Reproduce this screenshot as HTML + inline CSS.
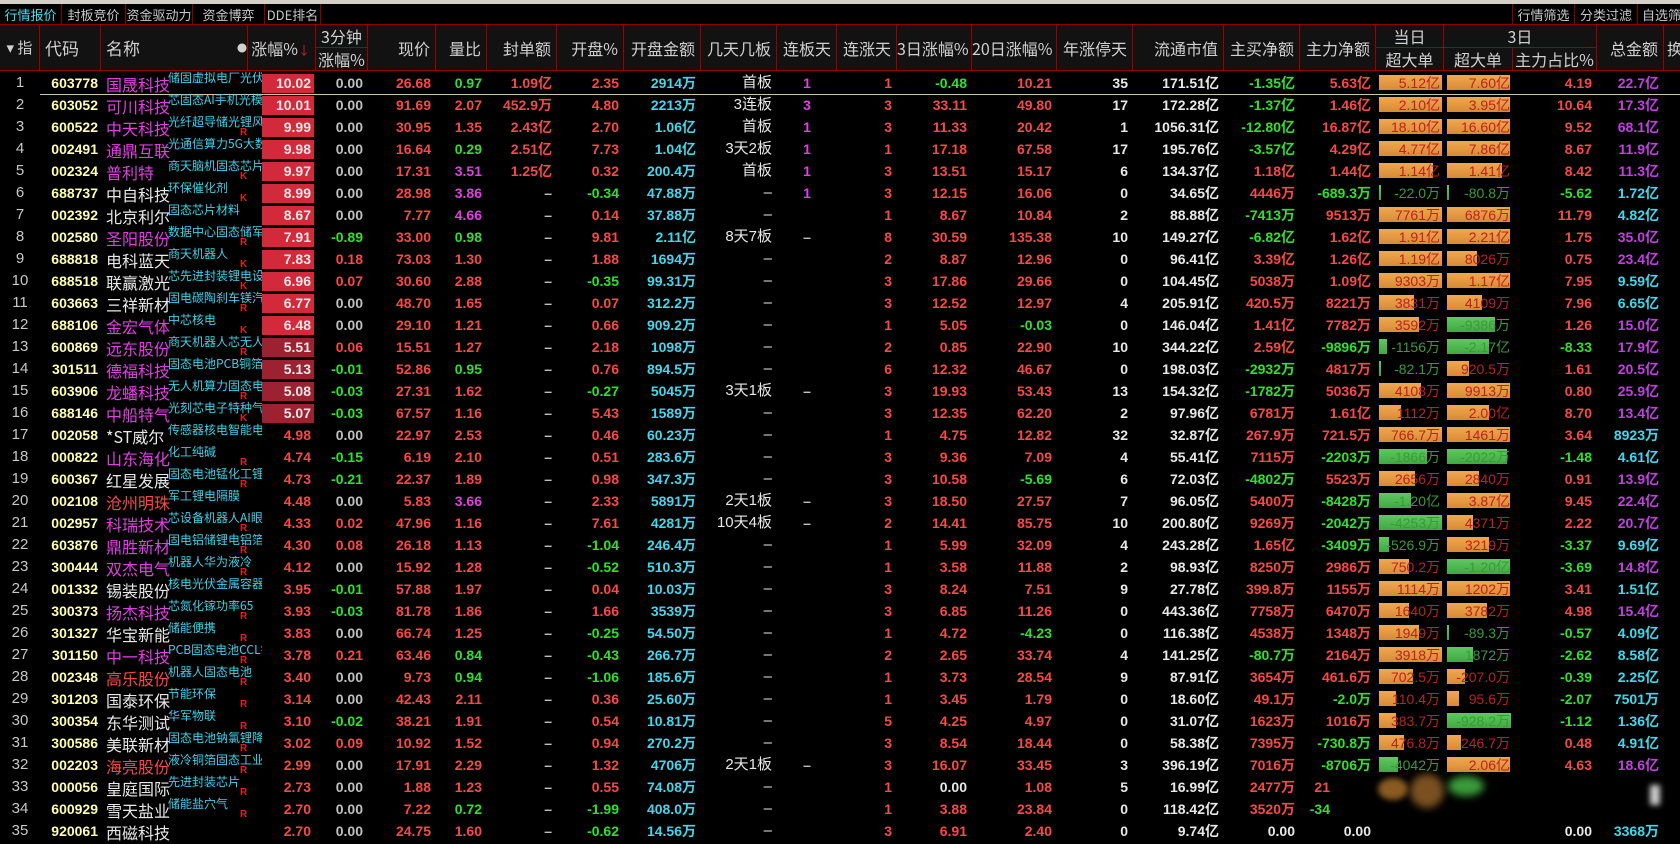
<!DOCTYPE html>
<html><head><meta charset="utf-8">
<style>
*{margin:0;padding:0;box-sizing:border-box}
body{width:1680px;height:837px;background:#000;overflow:hidden;position:relative;font-family:"Liberation Sans","Noto Sans CJK SC",sans-serif;color:#e0e0e0}
.top{position:absolute;left:0;top:0;width:1680px;height:4px;background:#d4d0c8}
.tabs{position:absolute;left:0;top:4px;height:21px;width:1680px;background:#000;border-bottom:1px solid #800}
.tab{position:absolute;top:0;height:21px;line-height:21px;font-size:13px;color:#c8c8c8;text-align:center;border-right:1px solid #800;font-family:"Noto Sans CJK SC",sans-serif}
.hd{position:absolute;top:25px;height:46px;left:0;width:1680px;background:#121212;border-bottom:1px solid #900}
.h{position:absolute;height:46px;line-height:46px;font-size:16px;color:#d0d0d0;border-right:1px solid #900;text-align:right;padding-right:5px;font-family:"Noto Sans CJK SC",sans-serif;white-space:nowrap;overflow:hidden}
.h2{height:23px;line-height:23px}
.r{position:absolute;left:0;width:1680px;height:22px;line-height:22px}
.r i{position:absolute;top:0;font-style:normal;font-weight:bold;font-size:14px;text-align:right;white-space:nowrap;font-family:"Liberation Sans","Noto Sans CJK SC",sans-serif}
.r i.c0{left:0;width:40px;text-align:center;color:#c8c8c8;font-weight:normal;font-size:15px}
.r i.c1{left:40px;width:58px;color:#ffffb0}
.r i.c2{left:106px;width:62px;text-align:left;font-size:16px;font-weight:normal;font-family:"Noto Sans CJK SC",sans-serif;top:1px}
.r i.c3{left:168px;width:94px;overflow:hidden;text-align:left;font-size:12px;font-weight:normal;color:#40d0e8;top:-5px;font-family:"Noto Sans CJK SC",sans-serif}
.r i.rk{left:240px;width:10px;font-size:10px;color:#e02020;top:6px;text-align:left}
.zb{position:absolute;left:262px;top:2px;width:52px;height:19px;background:#d22a3a}
.zb.d{background:#9c2232}
.r i.c4{left:248px;width:63px}
.r i.c5{left:316px;width:47px}
.r i.c6{left:368px;width:63px}
.r i.c7{left:436px;width:46px}
.r i.c8{left:487px;width:65px}
.r i.c9{left:556px;width:63px}
.r i.c10{left:624px;width:72px}
.r i.c11{left:701px;width:71px;font-weight:normal;font-size:15px}
.r i.c12{left:777px;width:60px;text-align:center}
.r i.c13{left:837px;width:55px}
.r i.c14{left:897px;width:70px}
.r i.c15{left:972px;width:80px}
.r i.c16{left:1057px;width:71px}
.r i.c17{left:1133px;width:86px}
.r i.c18{left:1224px;width:71px}
.r i.c19{left:1300px;width:71px}
.r i.c20{left:1376px;width:64px;font-weight:normal}
.r i.c21{left:1444px;width:66px;font-weight:normal}
.r i.c22{left:1513px;width:79px}
.r i.c23{left:1597px;width:62px}
.bd,.bt{position:absolute;top:3px;height:15px;background:linear-gradient(#f0a850,#d88a34)}
.bd{left:1379px}.bt{left:1447px}
.gn{background:linear-gradient(#60c860,#40a840)}
.R{color:#f84848!important}.G{color:#30e030!important}.W{color:#e8e8e8!important}.M{color:#e040e0!important}.C{color:#40d8ec!important}.S{color:#c0c0c0!important}.P{color:#c040e0!important}
.o{color:#c02020!important}.og{color:#3a9a3a!important}
.sep{position:absolute;left:40px;top:94px;width:1640px;height:1px;background:#c8c8a8}
</style></head><body>
<div class="top"></div>
<div class="tabs">
<div class="tab" style="left:0;width:62px;color:#40e0e8">行情报价</div>
<div class="tab" style="left:62px;width:64px">封板竞价</div>
<div class="tab" style="left:126px;width:67px">资金驱动力</div>
<div class="tab" style="left:193px;width:72px">资金博弈</div>
<div class="tab" style="left:265px;width:56px">DDE排名</div>
<div class="tab" style="left:1512px;width:63px;border-left:1px solid #800">行情筛选</div>
<div class="tab" style="left:1575px;width:63px">分类过滤</div>
<div class="tab" style="left:1638px;width:50px;text-align:left;padding-left:4px">自选筛</div>
</div>
<div class="hd">
<div class="h" style="left:0;width:40px;text-align:center;padding:0;font-size:15px">▾ 指</div>
<div class="h" style="left:40px;width:61px;text-align:left;padding-left:5px;font-size:17px">代码</div>
<div class="h" style="left:101px;width:147px;text-align:left;padding-left:5px;font-size:17px">名称<span style="position:absolute;left:136px;font-size:10px">●</span></div>
<div class="h" style="left:248px;width:68px">涨幅%<span style="color:#e02020;font-size:12px">↓</span></div>
<div class="h h2" style="left:316px;width:52px;text-align:center;padding:0;border-bottom:1px solid #900">3分钟</div>
<div class="h h2" style="left:316px;top:23px;width:52px;text-align:center;padding:0">涨幅%</div>
<div class="h" style="left:368px;width:68px">现价</div>
<div class="h" style="left:436px;width:51px">量比</div>
<div class="h" style="left:487px;width:70px">封单额</div>
<div class="h" style="left:557px;width:67px">开盘%</div>
<div class="h" style="left:624px;width:77px">开盘金额</div>
<div class="h" style="left:701px;width:76px">几天几板</div>
<div class="h" style="left:777px;width:60px">连板天</div>
<div class="h" style="left:837px;width:60px">连涨天</div>
<div class="h" style="left:897px;width:75px">3日涨幅%</div>
<div class="h" style="left:972px;width:85px">20日涨幅%</div>
<div class="h" style="left:1057px;width:76px">年涨停天</div>
<div class="h" style="left:1133px;width:91px">流通市值</div>
<div class="h" style="left:1224px;width:76px">主买净额</div>
<div class="h" style="left:1300px;width:76px">主力净额</div>
<div class="h h2" style="left:1376px;width:68px;text-align:center;padding:0;border-bottom:1px solid #900">当日</div>
<div class="h h2" style="left:1376px;top:23px;width:68px;text-align:center;padding:0">超大单</div>
<div class="h h2" style="left:1444px;width:153px;text-align:center;padding:0;border-bottom:1px solid #900">3日</div>
<div class="h h2" style="left:1444px;top:23px;width:69px;text-align:center;padding:0">超大单</div>
<div class="h h2" style="left:1513px;top:23px;width:84px;text-align:center;padding:0">主力占比%</div>
<div class="h" style="left:1597px;width:67px">总金额</div>
<div class="h" style="left:1664px;width:30px;text-align:left;padding-left:3px;border:0">换</div>
</div>

<div class="r" style="top:72px"><i class="c0">1</i><i class="c1">603778</i><i class="c2 M">国晟科技</i><i class="c3">储固虚拟电厂光伏</i><b class="zb"></b><i class="c4 W">10.02</i><i class="c5 S">0.00</i><i class="c6 R">26.68</i><i class="c7 G">0.97</i><i class="c8 R">1.09亿</i><i class="c9 R">2.35</i><i class="c10 C">2914万</i><i class="c11 W">首板</i><i class="c12 M">1</i><i class="c13 R">1</i><i class="c14 G">-0.48</i><i class="c15 R">10.21</i><i class="c16 W">35</i><i class="c17 W">171.51亿</i><i class="c18 G">-1.35亿</i><i class="c19 R">5.63亿</i><b class="bd" style="width:63px"></b><b class="bt" style="width:63px"></b><i class="c20 o">5.12亿</i><i class="c21 o">7.60亿</i><i class="c22 R">4.19</i><i class="c23 P">22.7亿</i></div>
<div class="sep"></div>
<div class="r" style="top:94px"><i class="c0">2</i><i class="c1">603052</i><i class="c2 M">可川科技</i><i class="c3">芯固态AI手机光模块</i><b class="zb"></b><i class="c4 W">10.01</i><i class="c5 S">0.00</i><i class="c6 R">91.69</i><i class="c7 R">2.07</i><i class="c8 R">452.9万</i><i class="c9 R">4.80</i><i class="c10 C">2213万</i><i class="c11 W">3连板</i><i class="c12 M">3</i><i class="c13 R">3</i><i class="c14 R">33.11</i><i class="c15 R">49.80</i><i class="c16 W">17</i><i class="c17 W">172.28亿</i><i class="c18 G">-1.37亿</i><i class="c19 R">1.46亿</i><b class="bd" style="width:63px"></b><b class="bt" style="width:63px"></b><i class="c20 o">2.10亿</i><i class="c21 o">3.95亿</i><i class="c22 R">10.64</i><i class="c23 P">17.3亿</i></div>
<div class="r" style="top:116px"><i class="c0">3</i><i class="c1">600522</i><i class="c2 M">中天科技</i><i class="c3">光纤超导储光锂风数据</i><i class="rk">R</i><b class="zb"></b><i class="c4 W">9.99</i><i class="c5 S">0.00</i><i class="c6 R">30.95</i><i class="c7 R">1.35</i><i class="c8 R">2.43亿</i><i class="c9 R">2.70</i><i class="c10 C">1.06亿</i><i class="c11 W">首板</i><i class="c12 M">1</i><i class="c13 R">3</i><i class="c14 R">11.33</i><i class="c15 R">20.42</i><i class="c16 W">1</i><i class="c17 W">1056.31亿</i><i class="c18 G">-12.80亿</i><i class="c19 R">16.87亿</i><b class="bd" style="width:63px"></b><b class="bt" style="width:63px"></b><i class="c20 o">18.10亿</i><i class="c21 o">16.60亿</i><i class="c22 R">9.52</i><i class="c23 P">68.1亿</i></div>
<div class="r" style="top:138px"><i class="c0">4</i><i class="c1">002491</i><i class="c2 M">通鼎互联</i><i class="c3">光通信算力5G大数据</i><b class="zb"></b><i class="c4 W">9.98</i><i class="c5 S">0.00</i><i class="c6 R">16.64</i><i class="c7 G">0.29</i><i class="c8 R">2.51亿</i><i class="c9 R">7.73</i><i class="c10 C">1.04亿</i><i class="c11 W">3天2板</i><i class="c12 M">1</i><i class="c13 R">1</i><i class="c14 R">17.18</i><i class="c15 R">67.58</i><i class="c16 W">17</i><i class="c17 W">195.76亿</i><i class="c18 G">-3.57亿</i><i class="c19 R">4.29亿</i><b class="bd" style="width:63px"></b><b class="bt" style="width:63px"></b><i class="c20 o">4.77亿</i><i class="c21 o">7.86亿</i><i class="c22 R">8.67</i><i class="c23 P">11.9亿</i></div>
<div class="r" style="top:160px"><i class="c0">5</i><i class="c1">002324</i><i class="c2 M">普利特</i><i class="c3">商天脑机固态芯片光刻</i><i class="rk">K</i><b class="zb"></b><i class="c4 W">9.97</i><i class="c5 S">0.00</i><i class="c6 R">17.31</i><i class="c7 M">3.51</i><i class="c8 R">1.25亿</i><i class="c9 R">0.32</i><i class="c10 C">200.4万</i><i class="c11 W">首板</i><i class="c12 M">1</i><i class="c13 R">3</i><i class="c14 R">13.51</i><i class="c15 R">15.17</i><i class="c16 W">6</i><i class="c17 W">134.37亿</i><i class="c18 R">1.18亿</i><i class="c19 R">1.44亿</i><b class="bd" style="width:54px"></b><b class="bt" style="width:55px"></b><i class="c20 o">1.14亿</i><i class="c21 o">1.41亿</i><i class="c22 R">8.42</i><i class="c23 P">11.3亿</i></div>
<div class="r" style="top:182px"><i class="c0">6</i><i class="c1">688737</i><i class="c2 W">中自科技</i><i class="c3">环保催化剂</i><i class="rk">K</i><b class="zb"></b><i class="c4 W">8.99</i><i class="c5 S">0.00</i><i class="c6 R">28.98</i><i class="c7 M">3.86</i><i class="c8 S">–</i><i class="c9 G">-0.34</i><i class="c10 C">47.88万</i><i class="c11 W">–</i><i class="c12 M">1</i><i class="c13 R">3</i><i class="c14 R">12.15</i><i class="c15 R">16.06</i><i class="c16 W">0</i><i class="c17 W">34.65亿</i><i class="c18 R">4446万</i><i class="c19 G">-689.3万</i><b class="bd gn" style="width:2px"></b><b class="bt gn" style="width:2px"></b><i class="c20 og">-22.0万</i><i class="c21 og">-80.8万</i><i class="c22 G">-5.62</i><i class="c23 C">1.72亿</i></div>
<div class="r" style="top:204px"><i class="c0">7</i><i class="c1">002392</i><i class="c2 W">北京利尔</i><i class="c3">固态芯片材料</i><b class="zb"></b><i class="c4 W">8.67</i><i class="c5 S">0.00</i><i class="c6 R">7.77</i><i class="c7 M">4.66</i><i class="c8 S">–</i><i class="c9 R">0.14</i><i class="c10 C">37.88万</i><i class="c11 W">–</i><i class="c13 R">1</i><i class="c14 R">8.67</i><i class="c15 R">10.84</i><i class="c16 W">2</i><i class="c17 W">88.88亿</i><i class="c18 G">-7413万</i><i class="c19 R">9513万</i><b class="bd" style="width:63px"></b><b class="bt" style="width:63px"></b><i class="c20 o">7761万</i><i class="c21 o">6876万</i><i class="c22 R">11.79</i><i class="c23 C">4.82亿</i></div>
<div class="r" style="top:226px"><i class="c0">8</i><i class="c1">002580</i><i class="c2 M">圣阳股份</i><i class="c3">数据中心固态储军光储</i><i class="rk">R</i><b class="zb"></b><i class="c4 W">7.91</i><i class="c5 G">-0.89</i><i class="c6 R">33.00</i><i class="c7 G">0.98</i><i class="c8 S">–</i><i class="c9 R">9.81</i><i class="c10 C">2.11亿</i><i class="c11 W">8天7板</i><i class="c12 S">–</i><i class="c13 R">8</i><i class="c14 R">30.59</i><i class="c15 R">135.38</i><i class="c16 W">10</i><i class="c17 W">149.27亿</i><i class="c18 G">-6.82亿</i><i class="c19 R">1.62亿</i><b class="bd" style="width:63px"></b><b class="bt" style="width:63px"></b><i class="c20 o">1.91亿</i><i class="c21 o">2.21亿</i><i class="c22 R">1.75</i><i class="c23 P">35.0亿</i></div>
<div class="r" style="top:248px"><i class="c0">9</i><i class="c1">688818</i><i class="c2 W">电科蓝天</i><i class="c3">商天机器人</i><i class="rk">K</i><b class="zb"></b><i class="c4 W">7.83</i><i class="c5 R">0.18</i><i class="c6 R">73.03</i><i class="c7 R">1.30</i><i class="c8 S">–</i><i class="c9 R">1.88</i><i class="c10 C">1694万</i><i class="c11 W">–</i><i class="c13 R">2</i><i class="c14 R">8.87</i><i class="c15 R">12.96</i><i class="c16 W">0</i><i class="c17 W">96.41亿</i><i class="c18 R">3.39亿</i><i class="c19 R">1.26亿</i><b class="bd" style="width:63px"></b><b class="bt" style="width:30px"></b><i class="c20 o">1.19亿</i><i class="c21 o">8026万</i><i class="c22 R">0.75</i><i class="c23 P">23.4亿</i></div>
<div class="r" style="top:270px"><i class="c0">10</i><i class="c1">688518</i><i class="c2 W">联赢激光</i><i class="c3">芯先进封装锂电设备</i><i class="rk">K</i><b class="zb"></b><i class="c4 W">6.96</i><i class="c5 R">0.07</i><i class="c6 R">30.60</i><i class="c7 R">2.88</i><i class="c8 S">–</i><i class="c9 G">-0.35</i><i class="c10 C">99.31万</i><i class="c11 W">–</i><i class="c13 R">3</i><i class="c14 R">17.86</i><i class="c15 R">29.66</i><i class="c16 W">0</i><i class="c17 W">104.45亿</i><i class="c18 R">5038万</i><i class="c19 R">1.09亿</i><b class="bd" style="width:63px"></b><b class="bt" style="width:63px"></b><i class="c20 o">9303万</i><i class="c21 o">1.17亿</i><i class="c22 R">7.95</i><i class="c23 C">9.59亿</i></div>
<div class="r" style="top:292px"><i class="c0">11</i><i class="c1">603663</i><i class="c2 W">三祥新材</i><i class="c3">固电碳陶刹车镁汽车</i><i class="rk">R</i><b class="zb"></b><i class="c4 W">6.77</i><i class="c5 S">0.00</i><i class="c6 R">48.70</i><i class="c7 R">1.65</i><i class="c8 S">–</i><i class="c9 R">0.07</i><i class="c10 C">312.2万</i><i class="c11 W">–</i><i class="c13 R">3</i><i class="c14 R">12.52</i><i class="c15 R">12.97</i><i class="c16 W">4</i><i class="c17 W">205.91亿</i><i class="c18 R">420.5万</i><i class="c19 R">8221万</i><b class="bd" style="width:35px"></b><b class="bt" style="width:35px"></b><i class="c20 o">3831万</i><i class="c21 o">4109万</i><i class="c22 R">7.96</i><i class="c23 C">6.65亿</i></div>
<div class="r" style="top:314px"><i class="c0">12</i><i class="c1">688106</i><i class="c2 M">金宏气体</i><i class="c3">中芯核电</i><i class="rk">K</i><b class="zb"></b><i class="c4 W">6.48</i><i class="c5 S">0.00</i><i class="c6 R">29.10</i><i class="c7 R">1.21</i><i class="c8 S">–</i><i class="c9 R">0.66</i><i class="c10 C">909.2万</i><i class="c11 W">–</i><i class="c13 R">1</i><i class="c14 R">5.05</i><i class="c15 G">-0.03</i><i class="c16 W">0</i><i class="c17 W">146.04亿</i><i class="c18 R">1.41亿</i><i class="c19 R">7782万</i><b class="bd" style="width:40px"></b><b class="bt gn" style="width:48px"></b><i class="c20 o">3592万</i><i class="c21 og">-9386万</i><i class="c22 R">1.26</i><i class="c23 P">15.0亿</i></div>
<div class="r" style="top:336px"><i class="c0">13</i><i class="c1">600869</i><i class="c2 M">远东股份</i><i class="c3">商天机器人芯无人机</i><i class="rk">R</i><b class="zb d"></b><i class="c4 W">5.51</i><i class="c5 R">0.06</i><i class="c6 R">15.51</i><i class="c7 R">1.27</i><i class="c8 S">–</i><i class="c9 R">2.18</i><i class="c10 C">1098万</i><i class="c11 W">–</i><i class="c13 R">2</i><i class="c14 R">0.85</i><i class="c15 R">22.90</i><i class="c16 W">10</i><i class="c17 W">344.22亿</i><i class="c18 R">2.59亿</i><i class="c19 G">-9896万</i><b class="bd gn" style="width:8px"></b><b class="bt gn" style="width:42px"></b><i class="c20 og">-1156万</i><i class="c21 og">-2.17亿</i><i class="c22 G">-8.33</i><i class="c23 P">17.9亿</i></div>
<div class="r" style="top:358px"><i class="c0">14</i><i class="c1">301511</i><i class="c2 M">德福科技</i><i class="c3">固态电池PCB铜箔5G</i><b class="zb d"></b><i class="c4 W">5.13</i><i class="c5 G">-0.01</i><i class="c6 R">52.86</i><i class="c7 G">0.95</i><i class="c8 S">–</i><i class="c9 R">0.76</i><i class="c10 C">894.5万</i><i class="c11 W">–</i><i class="c13 R">6</i><i class="c14 R">12.32</i><i class="c15 R">46.67</i><i class="c16 W">0</i><i class="c17 W">198.03亿</i><i class="c18 G">-2932万</i><i class="c19 R">4817万</i><b class="bd gn" style="width:2px"></b><b class="bt" style="width:22px"></b><i class="c20 og">-82.1万</i><i class="c21 o">920.5万</i><i class="c22 R">1.61</i><i class="c23 P">20.5亿</i></div>
<div class="r" style="top:380px"><i class="c0">15</i><i class="c1">603906</i><i class="c2 M">龙蟠科技</i><i class="c3">无人机算力固态电池</i><i class="rk">R</i><b class="zb d"></b><i class="c4 W">5.08</i><i class="c5 G">-0.03</i><i class="c6 R">27.31</i><i class="c7 R">1.62</i><i class="c8 S">–</i><i class="c9 G">-0.27</i><i class="c10 C">5045万</i><i class="c11 W">3天1板</i><i class="c12 S">–</i><i class="c13 R">3</i><i class="c14 R">19.93</i><i class="c15 R">53.43</i><i class="c16 W">13</i><i class="c17 W">154.32亿</i><i class="c18 G">-1782万</i><i class="c19 R">5036万</i><b class="bd" style="width:42px"></b><b class="bt" style="width:63px"></b><i class="c20 o">4108万</i><i class="c21 o">9913万</i><i class="c22 R">0.80</i><i class="c23 P">25.9亿</i></div>
<div class="r" style="top:402px"><i class="c0">16</i><i class="c1">688146</i><i class="c2 M">中船特气</i><i class="c3">光刻芯电子特种气体</i><i class="rk">K</i><b class="zb d"></b><i class="c4 W">5.07</i><i class="c5 G">-0.03</i><i class="c6 R">67.57</i><i class="c7 R">1.16</i><i class="c8 S">–</i><i class="c9 R">5.43</i><i class="c10 C">1589万</i><i class="c11 W">–</i><i class="c13 R">3</i><i class="c14 R">12.35</i><i class="c15 R">62.20</i><i class="c16 W">2</i><i class="c17 W">97.96亿</i><i class="c18 R">6781万</i><i class="c19 R">1.61亿</i><b class="bd" style="width:22px"></b><b class="bt" style="width:42px"></b><i class="c20 o">1112万</i><i class="c21 o">2.00亿</i><i class="c22 R">8.70</i><i class="c23 P">13.4亿</i></div>
<div class="r" style="top:424px"><i class="c0">17</i><i class="c1">002058</i><i class="c2 W">*ST威尔</i><i class="c3">传感器核电智能电网</i><i class="c4 R">4.98</i><i class="c5 S">0.00</i><i class="c6 R">22.97</i><i class="c7 R">2.53</i><i class="c8 S">–</i><i class="c9 R">0.46</i><i class="c10 C">60.23万</i><i class="c11 W">–</i><i class="c13 R">1</i><i class="c14 R">4.75</i><i class="c15 R">12.82</i><i class="c16 W">32</i><i class="c17 W">32.87亿</i><i class="c18 R">267.9万</i><i class="c19 R">721.5万</i><b class="bd" style="width:63px"></b><b class="bt" style="width:63px"></b><i class="c20 o">766.7万</i><i class="c21 o">1461万</i><i class="c22 R">3.64</i><i class="c23 C">8923万</i></div>
<div class="r" style="top:446px"><i class="c0">18</i><i class="c1">000822</i><i class="c2 M">山东海化</i><i class="c3">化工纯碱</i><i class="rk">R</i><i class="c4 R">4.74</i><i class="c5 G">-0.15</i><i class="c6 R">6.19</i><i class="c7 R">2.10</i><i class="c8 S">–</i><i class="c9 R">0.51</i><i class="c10 C">283.6万</i><i class="c11 W">–</i><i class="c13 R">3</i><i class="c14 R">9.36</i><i class="c15 R">7.09</i><i class="c16 W">4</i><i class="c17 W">55.41亿</i><i class="c18 R">7115万</i><i class="c19 G">-2203万</i><b class="bd gn" style="width:48px"></b><b class="bt gn" style="width:60px"></b><i class="c20 og">-1866万</i><i class="c21 og">-2022万</i><i class="c22 G">-1.48</i><i class="c23 C">4.61亿</i></div>
<div class="r" style="top:468px"><i class="c0">19</i><i class="c1">600367</i><i class="c2 W">红星发展</i><i class="c3">固态电池锰化工锂电</i><i class="rk">R</i><i class="c4 R">4.73</i><i class="c5 G">-0.21</i><i class="c6 R">22.37</i><i class="c7 R">1.89</i><i class="c8 S">–</i><i class="c9 R">0.98</i><i class="c10 C">347.3万</i><i class="c11 W">–</i><i class="c13 R">3</i><i class="c14 R">10.58</i><i class="c15 G">-5.69</i><i class="c16 W">6</i><i class="c17 W">72.03亿</i><i class="c18 G">-4802万</i><i class="c19 R">5523万</i><b class="bd" style="width:36px"></b><b class="bt" style="width:32px"></b><i class="c20 o">2656万</i><i class="c21 o">2840万</i><i class="c22 R">0.91</i><i class="c23 P">13.9亿</i></div>
<div class="r" style="top:490px"><i class="c0">20</i><i class="c1">002108</i><i class="c2 R" style="font-weight:normal">沧州明珠</i><i class="c3">军工锂电隔膜</i><i class="c4 R">4.48</i><i class="c5 S">0.00</i><i class="c6 R">5.83</i><i class="c7 M">3.66</i><i class="c8 S">–</i><i class="c9 R">2.33</i><i class="c10 C">5891万</i><i class="c11 W">2天1板</i><i class="c12 S">–</i><i class="c13 R">3</i><i class="c14 R">18.50</i><i class="c15 R">27.57</i><i class="c16 W">7</i><i class="c17 W">96.05亿</i><i class="c18 R">5400万</i><i class="c19 G">-8428万</i><b class="bd gn" style="width:32px"></b><b class="bt" style="width:63px"></b><i class="c20 og">-1.20亿</i><i class="c21 o">3.87亿</i><i class="c22 R">9.45</i><i class="c23 P">22.4亿</i></div>
<div class="r" style="top:512px"><i class="c0">21</i><i class="c1">002957</i><i class="c2 M">科瑞技术</i><i class="c3">芯设备机器人AI眼镜</i><i class="rk">R</i><i class="c4 R">4.33</i><i class="c5 R">0.02</i><i class="c6 R">47.96</i><i class="c7 R">1.16</i><i class="c8 S">–</i><i class="c9 R">7.61</i><i class="c10 C">4281万</i><i class="c11 W">10天4板</i><i class="c12 S">–</i><i class="c13 R">2</i><i class="c14 R">14.41</i><i class="c15 R">85.75</i><i class="c16 W">10</i><i class="c17 W">200.80亿</i><i class="c18 R">9269万</i><i class="c19 G">-2042万</i><b class="bd gn" style="width:63px"></b><b class="bt" style="width:26px"></b><i class="c20 og">-4253万</i><i class="c21 o">4371万</i><i class="c22 R">2.22</i><i class="c23 P">20.7亿</i></div>
<div class="r" style="top:534px"><i class="c0">22</i><i class="c1">603876</i><i class="c2 M">鼎胜新材</i><i class="c3">固电铝储锂电铝箔</i><i class="rk">R</i><i class="c4 R">4.30</i><i class="c5 R">0.08</i><i class="c6 R">26.18</i><i class="c7 R">1.13</i><i class="c8 S">–</i><i class="c9 G">-1.04</i><i class="c10 C">246.4万</i><i class="c11 W">–</i><i class="c13 R">1</i><i class="c14 R">5.99</i><i class="c15 R">32.09</i><i class="c16 W">4</i><i class="c17 W">243.28亿</i><i class="c18 R">1.65亿</i><i class="c19 G">-3409万</i><b class="bd gn" style="width:10px"></b><b class="bt" style="width:42px"></b><i class="c20 og">-526.9万</i><i class="c21 o">3219万</i><i class="c22 G">-3.37</i><i class="c23 C">9.69亿</i></div>
<div class="r" style="top:556px"><i class="c0">23</i><i class="c1">300444</i><i class="c2 M">双杰电气</i><i class="c3">机器人华为液冷</i><i class="rk">R</i><i class="c4 R">4.12</i><i class="c5 S">0.00</i><i class="c6 R">15.92</i><i class="c7 R">1.28</i><i class="c8 S">–</i><i class="c9 G">-0.52</i><i class="c10 C">510.3万</i><i class="c11 W">–</i><i class="c13 R">1</i><i class="c14 R">3.58</i><i class="c15 R">11.88</i><i class="c16 W">2</i><i class="c17 W">98.93亿</i><i class="c18 R">8250万</i><i class="c19 R">2986万</i><b class="bd" style="width:30px"></b><b class="bt gn" style="width:63px"></b><i class="c20 o">750.2万</i><i class="c21 og">-1.20亿</i><i class="c22 G">-3.69</i><i class="c23 P">14.8亿</i></div>
<div class="r" style="top:578px"><i class="c0">24</i><i class="c1">001332</i><i class="c2 W">锡装股份</i><i class="c3">核电光伏金属容器</i><i class="c4 R">3.95</i><i class="c5 G">-0.01</i><i class="c6 R">57.88</i><i class="c7 R">1.97</i><i class="c8 S">–</i><i class="c9 R">0.04</i><i class="c10 C">10.03万</i><i class="c11 W">–</i><i class="c13 R">3</i><i class="c14 R">8.24</i><i class="c15 R">7.51</i><i class="c16 W">9</i><i class="c17 W">27.78亿</i><i class="c18 R">399.8万</i><i class="c19 R">1155万</i><b class="bd" style="width:63px"></b><b class="bt" style="width:63px"></b><i class="c20 o">1114万</i><i class="c21 o">1202万</i><i class="c22 R">3.41</i><i class="c23 C">1.51亿</i></div>
<div class="r" style="top:600px"><i class="c0">25</i><i class="c1">300373</i><i class="c2 M">扬杰科技</i><i class="c3">芯氮化镓功率65</i><i class="rk">R</i><i class="c4 R">3.93</i><i class="c5 G">-0.03</i><i class="c6 R">81.78</i><i class="c7 R">1.86</i><i class="c8 S">–</i><i class="c9 R">1.66</i><i class="c10 C">3539万</i><i class="c11 W">–</i><i class="c13 R">3</i><i class="c14 R">6.85</i><i class="c15 R">11.26</i><i class="c16 W">0</i><i class="c17 W">443.36亿</i><i class="c18 R">7758万</i><i class="c19 R">6470万</i><b class="bd" style="width:30px"></b><b class="bt" style="width:40px"></b><i class="c20 o">1640万</i><i class="c21 o">3782万</i><i class="c22 R">4.98</i><i class="c23 P">15.4亿</i></div>
<div class="r" style="top:622px"><i class="c0">26</i><i class="c1">301327</i><i class="c2 W">华宝新能</i><i class="c3">储能便携</i><i class="rk">R</i><i class="c4 R">3.83</i><i class="c5 S">0.00</i><i class="c6 R">66.74</i><i class="c7 R">1.25</i><i class="c8 S">–</i><i class="c9 G">-0.25</i><i class="c10 C">54.50万</i><i class="c11 W">–</i><i class="c13 R">1</i><i class="c14 R">4.72</i><i class="c15 G">-4.23</i><i class="c16 W">0</i><i class="c17 W">116.38亿</i><i class="c18 R">4538万</i><i class="c19 R">1348万</i><b class="bd" style="width:40px"></b><b class="bt gn" style="width:2px"></b><i class="c20 o">1949万</i><i class="c21 og">-89.3万</i><i class="c22 G">-0.57</i><i class="c23 C">4.09亿</i></div>
<div class="r" style="top:644px"><i class="c0">27</i><i class="c1">301150</i><i class="c2 M">中一科技</i><i class="c3">PCB固态电池CCL铜箔</i><i class="rk">R</i><i class="c4 R">3.78</i><i class="c5 R">0.21</i><i class="c6 R">63.46</i><i class="c7 G">0.84</i><i class="c8 S">–</i><i class="c9 G">-0.43</i><i class="c10 C">266.7万</i><i class="c11 W">–</i><i class="c13 R">2</i><i class="c14 R">2.65</i><i class="c15 R">33.74</i><i class="c16 W">4</i><i class="c17 W">141.25亿</i><i class="c18 G">-80.7万</i><i class="c19 R">2164万</i><b class="bd" style="width:63px"></b><b class="bt gn" style="width:26px"></b><i class="c20 o">3918万</i><i class="c21 og">1872万</i><i class="c22 G">-2.62</i><i class="c23 C">8.58亿</i></div>
<div class="r" style="top:666px"><i class="c0">28</i><i class="c1">002348</i><i class="c2 R" style="font-weight:normal">高乐股份</i><i class="c3">机器人固态电池</i><i class="rk">R</i><i class="c4 R">3.40</i><i class="c5 S">0.00</i><i class="c6 R">9.73</i><i class="c7 G">0.94</i><i class="c8 S">–</i><i class="c9 G">-1.06</i><i class="c10 C">185.6万</i><i class="c11 W">–</i><i class="c13 R">1</i><i class="c14 R">3.73</i><i class="c15 R">28.54</i><i class="c16 W">9</i><i class="c17 W">87.91亿</i><i class="c18 R">3654万</i><i class="c19 R">461.6万</i><b class="bd" style="width:34px"></b><b class="bt" style="width:18px"></b><i class="c20 o">702.5万</i><i class="c21 o">-207.0万</i><i class="c22 G">-0.39</i><i class="c23 C">2.25亿</i></div>
<div class="r" style="top:688px"><i class="c0">29</i><i class="c1">301203</i><i class="c2 W">国泰环保</i><i class="c3">节能环保</i><i class="rk">R</i><i class="c4 R">3.14</i><i class="c5 S">0.00</i><i class="c6 R">42.43</i><i class="c7 R">2.11</i><i class="c8 S">–</i><i class="c9 R">0.36</i><i class="c10 C">25.60万</i><i class="c11 W">–</i><i class="c13 R">1</i><i class="c14 R">3.45</i><i class="c15 R">1.79</i><i class="c16 W">0</i><i class="c17 W">18.60亿</i><i class="c18 R">49.1万</i><i class="c19 G">-2.0万</i><b class="bd" style="width:17px"></b><b class="bt" style="width:12px"></b><i class="c20 o">110.4万</i><i class="c21 o">95.6万</i><i class="c22 G">-2.07</i><i class="c23 C">7501万</i></div>
<div class="r" style="top:710px"><i class="c0">30</i><i class="c1">300354</i><i class="c2 W">东华测试</i><i class="c3">华军物联</i><i class="rk">R</i><i class="c4 R">3.10</i><i class="c5 G">-0.02</i><i class="c6 R">38.21</i><i class="c7 R">1.91</i><i class="c8 S">–</i><i class="c9 R">0.54</i><i class="c10 C">10.81万</i><i class="c11 W">–</i><i class="c13 R">5</i><i class="c14 R">4.25</i><i class="c15 R">4.97</i><i class="c16 W">0</i><i class="c17 W">31.07亿</i><i class="c18 R">1623万</i><i class="c19 R">1016万</i><b class="bd" style="width:17px"></b><b class="bt gn" style="width:64px"></b><i class="c20 o">383.7万</i><i class="c21 og">-928.2万</i><i class="c22 G">-1.12</i><i class="c23 C">1.36亿</i></div>
<div class="r" style="top:732px"><i class="c0">31</i><i class="c1">300586</i><i class="c2 W">美联新材</i><i class="c3">固态电池钠氯锂降解</i><i class="rk">R</i><i class="c4 R">3.02</i><i class="c5 R">0.09</i><i class="c6 R">10.92</i><i class="c7 R">1.52</i><i class="c8 S">–</i><i class="c9 R">0.94</i><i class="c10 C">270.2万</i><i class="c11 W">–</i><i class="c13 R">3</i><i class="c14 R">8.54</i><i class="c15 R">18.44</i><i class="c16 W">0</i><i class="c17 W">58.38亿</i><i class="c18 R">7395万</i><i class="c19 G">-730.8万</i><b class="bd" style="width:25px"></b><b class="bt" style="width:14px"></b><i class="c20 o">476.8万</i><i class="c21 o">246.7万</i><i class="c22 R">0.48</i><i class="c23 C">4.91亿</i></div>
<div class="r" style="top:754px"><i class="c0">32</i><i class="c1">002203</i><i class="c2 R" style="font-weight:normal">海亮股份</i><i class="c3">液冷铜箔固态工业金属</i><i class="rk">R</i><i class="c4 R">2.99</i><i class="c5 S">0.00</i><i class="c6 R">17.91</i><i class="c7 R">2.29</i><i class="c8 S">–</i><i class="c9 R">1.32</i><i class="c10 C">4706万</i><i class="c11 W">2天1板</i><i class="c12 S">–</i><i class="c13 R">3</i><i class="c14 R">16.07</i><i class="c15 R">33.45</i><i class="c16 W">3</i><i class="c17 W">396.19亿</i><i class="c18 R">7016万</i><i class="c19 G">-8706万</i><b class="bd gn" style="width:19px"></b><b class="bt" style="width:63px"></b><i class="c20 og">-4042万</i><i class="c21 o">2.06亿</i><i class="c22 R">4.63</i><i class="c23 P">18.6亿</i></div>
<div class="r" style="top:776px"><i class="c0">33</i><i class="c1">000056</i><i class="c2 W">皇庭国际</i><i class="c3">先进封装芯片</i><i class="rk">R</i><i class="c4 R">2.73</i><i class="c5 S">0.00</i><i class="c6 R">1.88</i><i class="c7 R">1.23</i><i class="c8 S">–</i><i class="c9 R">0.55</i><i class="c10 C">74.08万</i><i class="c11 W">–</i><i class="c13 R">1</i><i class="c14 W">0.00</i><i class="c15 R">1.08</i><i class="c16 W">5</i><i class="c17 W">16.99亿</i><i class="c18 R">2477万</i><i class="c19 R" style="width:30px">21</i></div>
<div class="r" style="top:798px"><i class="c0">34</i><i class="c1">600929</i><i class="c2 W">雪天盐业</i><i class="c3">储能盐穴气</i><i class="rk">R</i><i class="c4 R">2.70</i><i class="c5 S">0.00</i><i class="c6 R">7.22</i><i class="c7 G">0.72</i><i class="c8 S">–</i><i class="c9 G">-1.99</i><i class="c10 C">408.0万</i><i class="c11 W">–</i><i class="c13 R">1</i><i class="c14 R">3.88</i><i class="c15 R">23.84</i><i class="c16 W">0</i><i class="c17 W">118.42亿</i><i class="c18 R">3520万</i><i class="c19 G" style="width:30px">-34</i></div>
<div class="r" style="top:820px"><i class="c0">35</i><i class="c1">920061</i><i class="c2 W">西磁科技</i><i class="c4 R">2.70</i><i class="c5 S">0.00</i><i class="c6 R">24.75</i><i class="c7 R">1.60</i><i class="c8 S">–</i><i class="c9 G">-0.62</i><i class="c10 C">14.56万</i><i class="c11 W">–</i><i class="c13 R">3</i><i class="c14 R">6.91</i><i class="c15 R">2.40</i><i class="c16 W">0</i><i class="c17 W">9.74亿</i><i class="c18 W">0.00</i><i class="c19 W">0.00</i><i class="c22 W">0.00</i><i class="c23 C">3368万</i></div>

<div style="position:absolute;left:1378px;top:778px;width:30px;height:22px;border-radius:50%;background:#8a5a20;filter:blur(3px)"></div>
<div style="position:absolute;left:1410px;top:774px;width:34px;height:34px;border-radius:50%;background:#7a5020;filter:blur(4px)"></div>
<div style="position:absolute;left:1448px;top:776px;width:36px;height:20px;border-radius:50%;background:#3a9a3a;filter:blur(4px)"></div>
<div style="position:absolute;left:1650px;top:785px;width:10px;height:20px;background:#ccc;filter:blur(3px)"></div>
</body></html>
